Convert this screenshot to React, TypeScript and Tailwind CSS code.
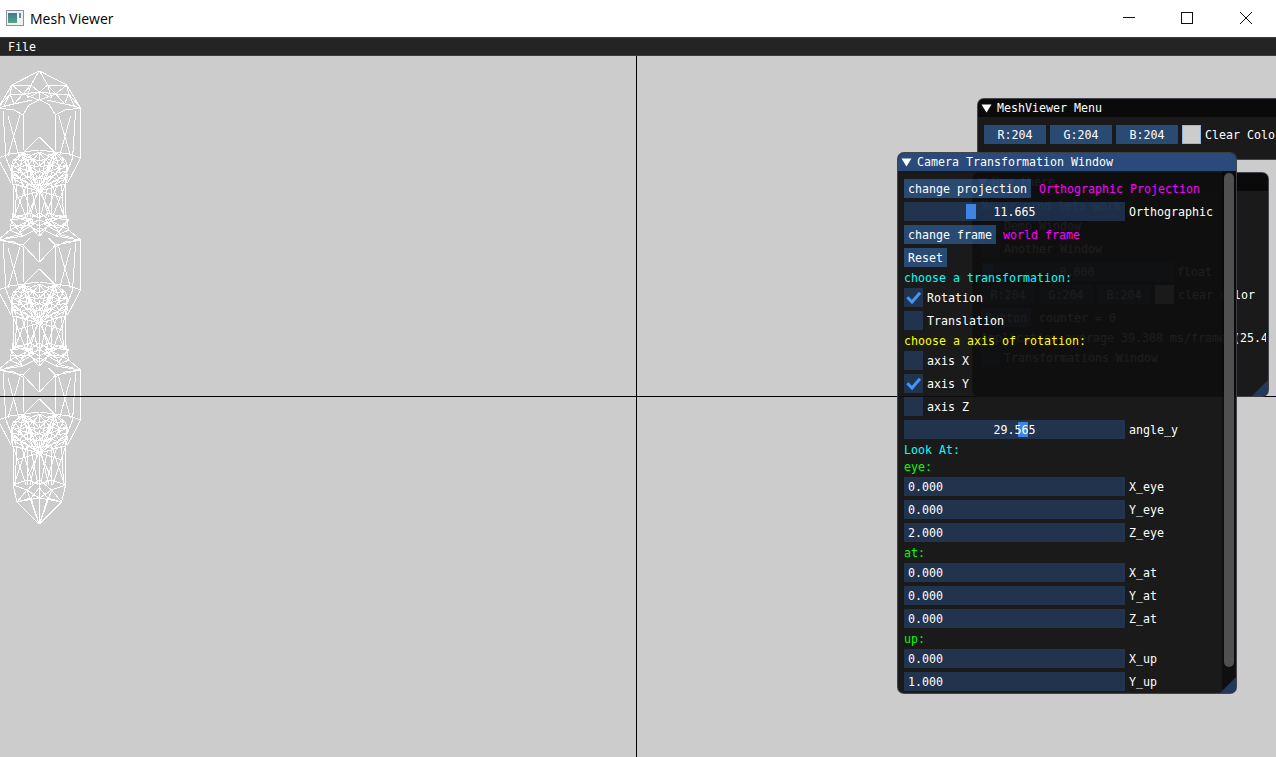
import type { ReactNode } from 'react';

// wireframe mesh: every line is drawn on the left and mirrored around the chain axis
const AXIS = 78.6;
const segs: number[][] = [];
const line = (x1: number, y1: number, x2: number, y2: number) => {
  segs.push([x1, y1, x2, y2]);
  segs.push([AXIS - x1, y1, AXIS - x2, y2]);
};
const strip = (...p: number[][]) => {
  for (let i = 0; i < p.length - 1; i++) line(p[i][0], p[i][1], p[i + 1][0], p[i + 1][1]);
};

// star shaped cap that sits above the widest part of a link
const star = (y: number, apex: boolean) => {
  if (apex) {
    strip([39, y - 37], [12, y - 23], [-2, y]);
    strip([39, y - 37], [31, y - 23], [12, y - 23]);
    strip([31, y - 23], [39, y - 16], [39.3, y - 8]);
    strip([12, y - 23], [23, y - 14], [39, y - 8]);
    strip([12, y - 23], [10, y - 14], [-2, y]);
    strip([10, y - 14], [23, y - 14], [31, y - 23]);
    strip([10, y - 14], [14, y - 4], [-2, y]);
    strip([23, y - 14], [14, y - 4], [32, y - 8]);
    strip([14, y - 4], [4, y - 2], [10, y - 14]);
    strip([23, y - 14], [39, y - 16]);
    strip([31, y - 23], [27, y - 10], [39, y - 16]);
    return;
  }
  strip([13, y - 27], [10, y - 10], [-2, y]);
  strip([10, y - 10], [26, y - 18], [39, y - 27]);
  strip([10, y - 10], [23, y - 4], [39, y - 12]);
  strip([10, y - 20], [26, y - 22], [39, y - 14]);
  strip([10, y - 20], [23, y - 4], [-2, y]);
  strip([10, y - 20], [20, y - 12], [39, y - 20]);
  strip([26, y - 18], [18, y - 5], [6, y - 2]);
  strip([26, y - 22], [32, y - 12], [39, y - 4]);
  strip([14, y - 24], [34, y - 16], [20, y - 8]);
  strip([13, y - 22], [30, y - 27], [39, y - 22]);
  strip([17, y - 25], [33, y - 20], [23, y - 12]);
  strip([10, y - 15], [30, y - 14], [39, y - 8]);
  strip([39, y - 27], [39.5, y - 4]);
};

// side panels, inner triangle and the dense dome under it
const link = (y: number, arch: boolean) => {
  strip([-2, y], [-2, y + 50]);
  strip([3, y + 3], [6, y + 50]);
  strip([23, y + 7], [23, y + 42]);
  strip([8, y + 8], [19, y + 48]);
  strip([20, y + 7], [8, y + 48]);
  strip([-2, y], [14, y + 2], [23, y + 7]);
  if (arch) {
    strip([23, y + 7], [29, y - 3], [39, y - 8]);
  } else {
    strip([23, y + 5], [39, y + 22]);
    strip([39, y + 2], [39, y + 22]);
    strip([30, y - 2], [23, y + 5]);
    strip([-2, y], [23, y + 5]);
  }
  strip([-2, y + 50], [10, y + 46], [24, y + 44]);
  strip([-2, y + 50], [11, y + 75]);
  strip([39, y + 29], [24, y + 44], [39, y + 42]);
  strip([6, y + 50], [16, y + 75]);

  const rows = [y + 46, y + 52, y + 58, y + 64, y + 70, y + 77];
  const xs = [[22, 30, 39], [14, 24, 33, 39], [11, 19, 28, 39], [12, 22, 32, 39], [11, 20, 30, 39], [13, 24, 33, 39]];
  rows.forEach((ry, i) => {
    const row = xs[i];
    row.forEach((x, j) => {
      const bend = j % 2 ? 2 : -1;
      if (j < row.length - 1) line(x, ry + bend, row[j + 1], ry - bend);
      if (i < rows.length - 1) {
        const next = xs[i + 1];
        line(x, ry + bend, next[Math.min(j, next.length - 1)], rows[i + 1]);
        line(x, ry + bend, next[Math.min(j + 1, next.length - 1)], rows[i + 1]);
      }
    });
  });
  strip([24, y + 44], [12, y + 58], [13, y + 76]);

  // fans that meet in the bright node on the axis under the dome
  const node = [39, y + 83];
  [[13, y + 66], [18, y + 60], [26, y + 55], [33, y + 50], [13, y + 76], [24, y + 72], [16, y + 90], [27, y + 108]].forEach((p) =>
    line(node[0], node[1], p[0], p[1]),
  );
  const fan = [24, y + 44];
  [[33, y + 64], [28, y + 70], [39, y + 58], [18, y + 66], [36, y + 74]].forEach((p) => line(fan[0], fan[1], p[0], p[1]));
};

// the thin stretch between two links
const neck = (y: number, h: number) => {
  strip([13, y], [13, y + h]);
  strip([17, y], [15, y + h]);
  strip([27, y], [27, y + h]);
  strip([13, y], [26, y + h]);
  strip([27, y], [14, y + h]);
  strip([39, y + 8], [39, y + h]);
  strip([38, y + 4], [30, y + h]);
  strip([39.5, y + 14], [39.5, y + h]);
  strip([31, y + 4], [38, y + h]);
  strip([22, y + 2], [33, y + h]);
};

star(108, true);
link(108, true);
neck(184, 33);
star(240, false);
link(240, false);
neck(316, 34);
star(370, false);
link(370, false);
neck(446, 39);
strip([13, 485], [17, 502], [39, 524]);
strip([13, 485], [27, 480], [39, 484]);
strip([13, 485], [27, 490], [39, 480]);
strip([17, 502], [27, 490], [39, 524]);
strip([17, 502], [31, 498], [39, 488]);
strip([31, 498], [39, 524]);
strip([27, 490], [39, 498]);
strip([39, 484], [39, 524]);
strip([17, 502], [39, 498]);
strip([39.6, 470], [39.6, 492]);

const MESH_PATH = segs.map((s) => `M${s[0]} ${s[1]}L${s[2]} ${s[3]}`).join('');

function Arrow() {
  return (
    <svg width="11" height="9" viewBox="0 0 11 9" className="shrink-0">
      <path d="M0.5 0.5H10.5L5.5 8.5Z" fill="#ffffff" />
    </svg>
  );
}

function Button({ children, w }: { children: ReactNode; w: string }) {
  return <div className={`flex h-[19px] shrink-0 items-center justify-center bg-[rgba(66,150,250,0.4)] pt-[2px] ${w}`}>{children}</div>;
}

function Field({ children, className = '' }: { children?: ReactNode; className?: string }) {
  return <div className={`flex h-[19px] shrink-0 items-center bg-[rgba(41,74,122,0.54)] pt-[2px] ${className}`}>{children}</div>;
}

function Label({ children, className = '' }: { children: ReactNode; className?: string }) {
  return <span className={`pt-[2px] ${className}`}>{children}</span>;
}

function Line({ children, className = '' }: { children: ReactNode; className?: string }) {
  return <div className={`h-[13px] pt-[1px] ${className}`}>{children}</div>;
}

function Check({ on, label }: { on?: boolean; label: string }) {
  return (
    <div className="flex h-[19px] items-center gap-[4px]">
      <div className="h-[19px] w-[19px] shrink-0 bg-[rgba(41,74,122,0.54)]">
        {on && (
          <svg width="19" height="19" viewBox="0 0 19 19">
            <path d="M3.3 9.3L8 14L16 4.7" fill="none" stroke="#4296fa" strokeWidth="3" />
          </svg>
        )}
      </div>
      <Label>{label}</Label>
    </div>
  );
}

function Slider({ value, label, grab }: { value: string; label: string; grab: string }) {
  return (
    <div className="flex h-[19px] items-center gap-[4px]">
      <Field className="relative w-[221px] justify-center">
        <div className={`absolute top-[2px] h-[15px] w-[10px] bg-[#3d85e0] ${grab}`} />
        <span className="relative">{value}</span>
      </Field>
      <Label>{label}</Label>
    </div>
  );
}

function Input({ value, label }: { value: string; label: string }) {
  return (
    <div className="flex h-[19px] items-center gap-[4px]">
      <Field className="w-[221px] pl-[4px]">{value}</Field>
      <Label>{label}</Label>
    </div>
  );
}

function Corner() {
  return (
    <svg width="16" height="16" viewBox="0 0 16 16" className="absolute bottom-0 right-0">
      <path d="M16 0V16H0Z" fill="#23395c" />
    </svg>
  );
}

export default function App() {
  return (
    <div className="relative flex h-[757px] w-[1276px] flex-col overflow-hidden bg-[#cccccc] font-['DejaVu_Sans_Mono',monospace] text-[11.63px] leading-[13px] text-white">
      {/* Windows title bar */}
      <div className="flex h-[37px] shrink-0 items-center bg-white pl-[6px] text-black">
        <svg width="18" height="16" viewBox="0 0 18 16" className="mb-[1px]">
          <defs>
            <linearGradient id="icon-fill" x1="0" y1="0" x2="0" y2="1">
              <stop offset="0" stopColor="#3f7a9a" />
              <stop offset="1" stopColor="#5aa37f" />
            </linearGradient>
          </defs>
          <rect x="0.5" y="0.5" width="17" height="15" fill="#eef2f3" stroke="#8a9499" />
          <rect x="2" y="3" width="9" height="10" fill="url(#icon-fill)" />
          <rect x="13" y="3" width="2" height="5" fill="#6b8a95" />
        </svg>
        <span className="ml-[6px] font-['Open_Sans',sans-serif] text-[14px] leading-[20px]">Mesh Viewer</span>
        <div className="ml-auto flex h-full items-center">
          <svg width="59" height="37" viewBox="0 0 59 37">
            <path d="M25 17.5H37" stroke="#111111" fill="none" />
          </svg>
          <svg width="60" height="37" viewBox="0 0 60 37">
            <rect x="24.5" y="12.5" width="11" height="11" stroke="#111111" fill="none" />
          </svg>
          <svg width="60" height="37" viewBox="0 0 60 37" className="mr-[-1px]">
            <path d="M23 12L35 24M35 12L23 24" stroke="#111111" fill="none" />
          </svg>
        </div>
      </div>

      {/* Menu bar */}
      <div className="flex h-[19px] shrink-0 items-center border-y border-[#3b3b42] bg-[#242424] pl-[8px] pt-[2px]">File</div>

      {/* Viewport */}
      <svg width="90" height="480" viewBox="0 60 90 480" className="absolute left-0 top-[60px]">
        <path d={MESH_PATH} fill="none" stroke="#ffffff" strokeWidth="1" shapeRendering="crispEdges" />
      </svg>
      <div className="absolute bottom-0 left-[636px] top-[56px] w-px bg-black" />
      <div className="absolute left-0 right-0 top-[396px] h-px bg-black" />

      {/* MeshViewer Menu */}
      <div className="absolute left-[977px] top-[98px] h-[62px] w-[320px] overflow-hidden rounded-tl-[7px] border border-[rgba(110,110,128,0.5)] bg-[rgba(15,15,15,0.94)]">
        <div className="flex h-[18px] items-center gap-[4px] bg-[#0a0a0a] pl-[3px]">
          <Arrow />
          <span className="ml-[1px]">MeshViewer Menu</span>
        </div>
        <div className="flex items-center gap-[4px] pl-[6px] pt-[8px]">
          <Button w="w-[62px]">R:204</Button>
          <Button w="w-[62px]">G:204</Button>
          <Button w="w-[62px]">B:204</Button>
          <div className="h-[19px] w-[19px] border border-[rgba(66,150,250,0.4)] bg-[#cccccc]" />
          <Label>Clear Color</Label>
        </div>
      </div>

      {/* Hey there, mostly behind the camera window */}
      <div className="absolute left-[972px] top-[172px] h-[225px] w-[297px] overflow-hidden rounded-[7px] border border-[rgba(110,110,128,0.5)] bg-[rgba(15,15,15,0.94)]">
        <div className="flex h-[18px] items-center gap-[4px] bg-[#0a0a0a] pl-[4px]">
          <Arrow />
          <span>Hey there</span>
        </div>
        <div className="flex w-[293px] flex-col gap-[4px] overflow-hidden pl-[8px] pt-[8px]">
          <Line>Never mind lets work</Line>
          <Check label="Demo Window" />
          <Check label="Another Window" />
          <div className="flex h-[19px] items-center gap-[4px]">
            <Field className="relative w-[192px] justify-center">
              <div className="absolute left-[2px] top-[2px] h-[15px] w-[10px] bg-[#3d85e0]" />
              0.000
            </Field>
            <Label>float</Label>
          </div>
          <div className="flex items-center gap-[4px]">
            <Field className="w-[54px] justify-center">R:204</Field>
            <Field className="w-[54px] justify-center">G:204</Field>
            <Field className="w-[54px] justify-center">B:204</Field>
            <div className="h-[19px] w-[19px] bg-[#cccccc]" />
            <Label>clear color</Label>
          </div>
          <div className="flex items-center gap-[8px]">
            <Button w="w-[50px]">Button</Button>
            <Label>counter = 0</Label>
          </div>
          <Line className="whitespace-nowrap">Application average 39.308 ms/frame (25.4 FPS)</Line>
          <Check label="Transformations Window" />
        </div>
        <Corner />
      </div>

      {/* Camera Transformation Window */}
      <div className="absolute left-[897px] top-[152px] h-[542px] w-[340px] overflow-hidden rounded-[7px] border border-[rgba(110,110,128,0.5)] bg-[rgba(15,15,15,0.94)]">
        <div className="flex h-[18px] items-center gap-[4px] bg-[#294a7a] pl-[3px]">
          <Arrow />
          <span className="ml-[1px]">Camera Transformation Window</span>
        </div>
        <div className="flex flex-col gap-[4px] whitespace-nowrap pl-[6px] pt-[8px]">
          <div className="flex items-center gap-[8px]">
            <Button w="w-[127px]">change projection</Button>
            <Label className="text-[#ff00ff]">Orthographic Projection</Label>
          </div>
          <Slider value="11.665" label="Orthographic" grab="left-[62px]" />
          <div className="flex items-center gap-[7px]">
            <Button w="w-[92px]">change frame</Button>
            <Label className="text-[#ff00ff]">world frame</Label>
          </div>
          <Button w="w-[43px]">Reset</Button>
          <Line className="text-[#00ffff]">choose a transformation:</Line>
          <Check on label="Rotation" />
          <Check label="Translation" />
          <Line className="text-[#ffff00]">choose a axis of rotation:</Line>
          <Check label="axis X" />
          <Check on label="axis Y" />
          <Check label="axis Z" />
          <Slider value="29.565" label="angle_y" grab="left-[114px]" />
          <Line className="text-[#00ffff]">Look At:</Line>
          <Line className="text-[#00ff00]">eye:</Line>
          <Input value="0.000" label="X_eye" />
          <Input value="0.000" label="Y_eye" />
          <Input value="2.000" label="Z_eye" />
          <Line className="text-[#00ff00]">at:</Line>
          <Input value="0.000" label="X_at" />
          <Input value="0.000" label="Y_at" />
          <Input value="0.000" label="Z_at" />
          <Line className="text-[#00ff00]">up:</Line>
          <Input value="0.000" label="X_up" />
          <Input value="1.000" label="Y_up" />
        </div>
        <div className="absolute bottom-0 right-0 top-[18px] w-[14px] bg-[rgba(5,5,5,0.53)] px-[2px] pt-[2px]">
          <div className="h-[494px] rounded-[5px] bg-[#505050]" />
        </div>
        <Corner />
      </div>
    </div>
  );
}
